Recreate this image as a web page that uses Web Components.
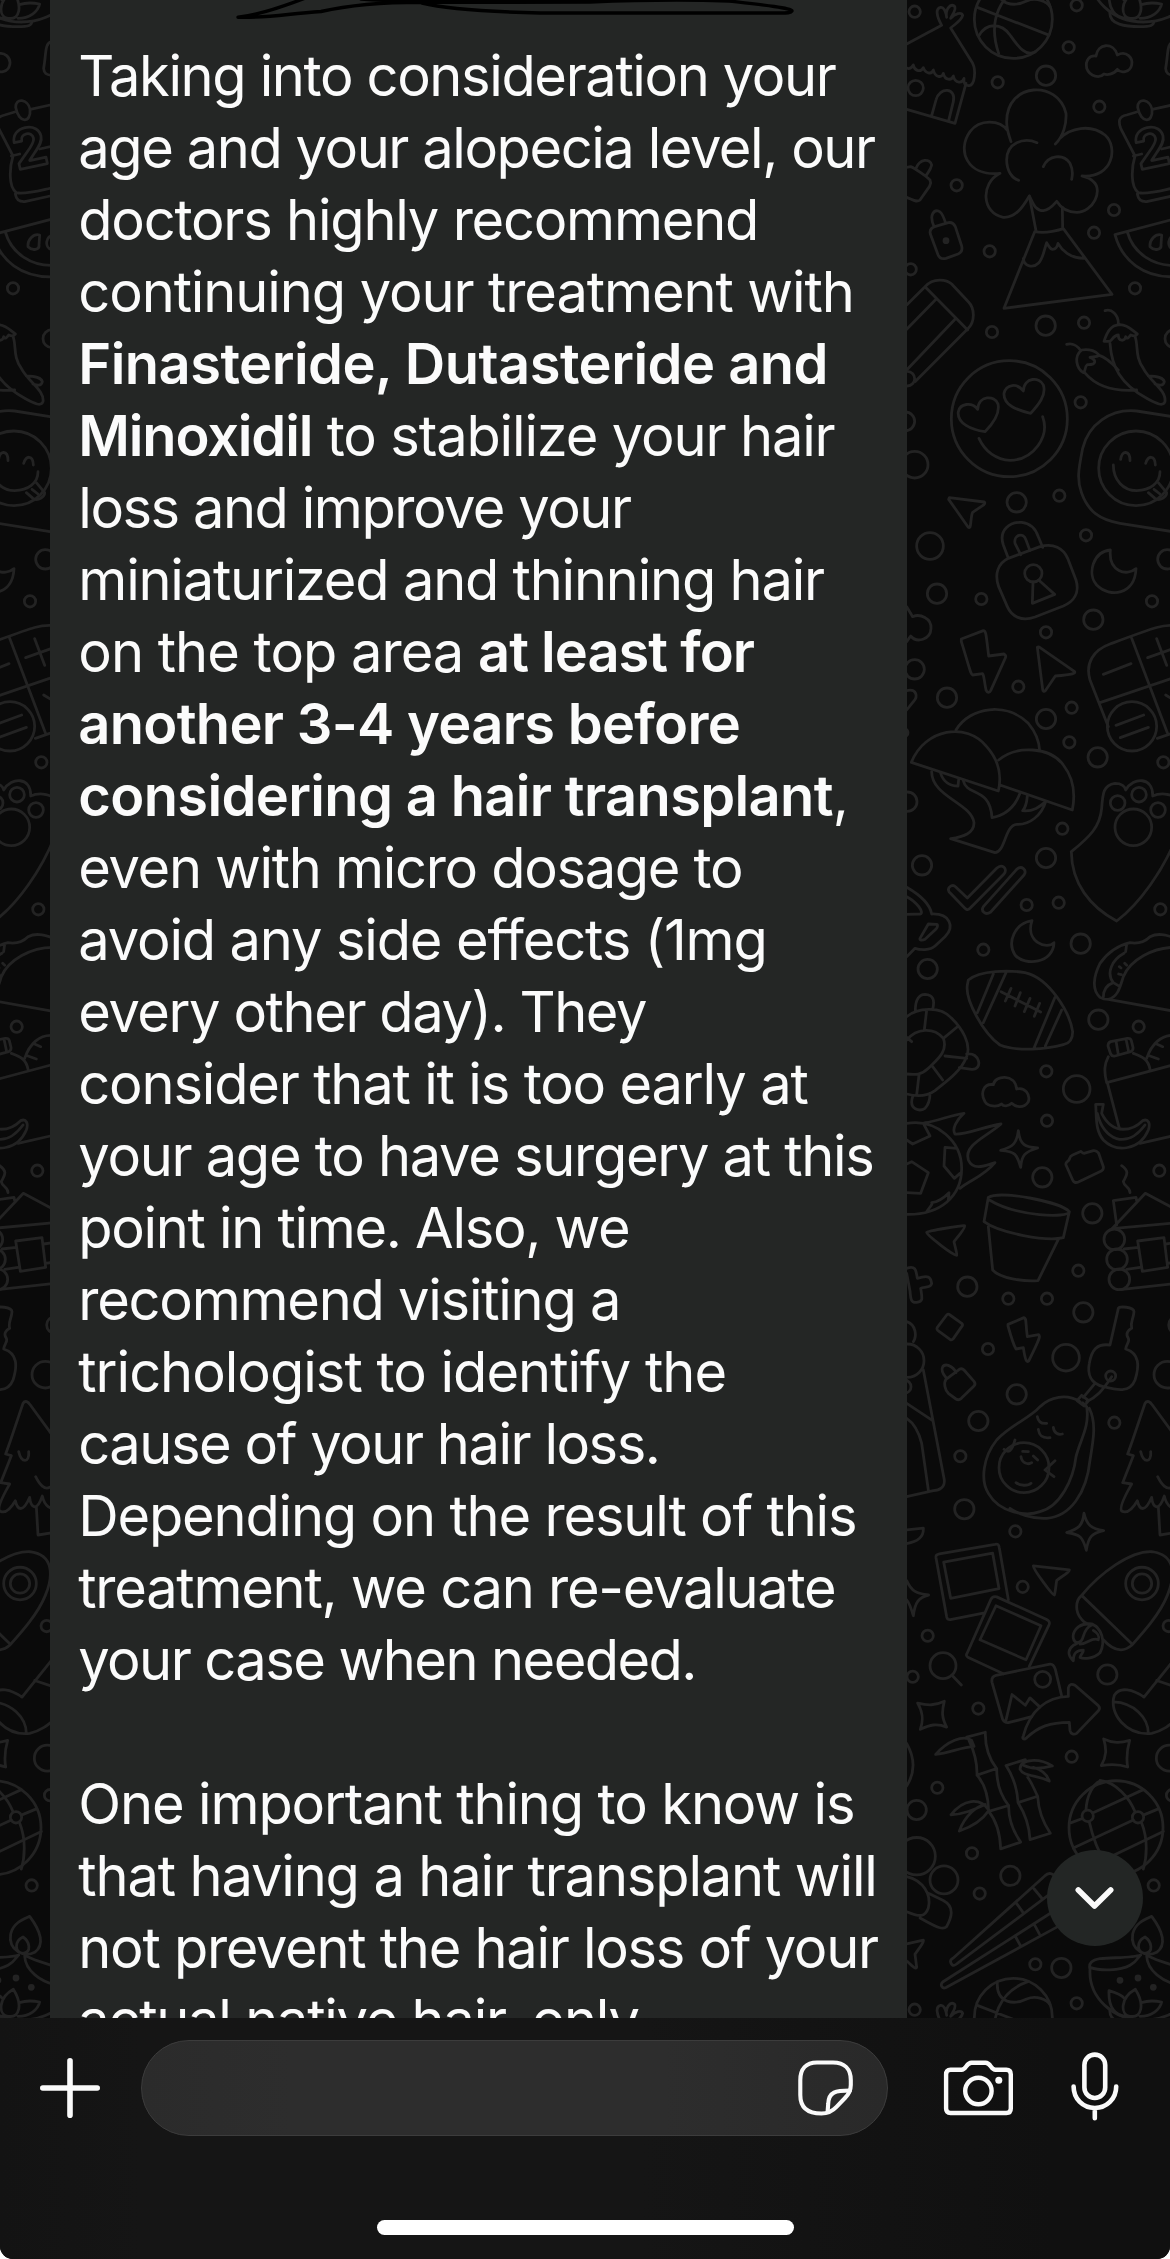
<!DOCTYPE html>
<html lang="en">
<head>
<meta charset="utf-8">
<title>Chat</title>
<style>
  html, body {
    margin: 0;
    background: #fff;
  }

  body {
    font-family: Inter, "Liberation Sans", sans-serif;
    --color-page: #0a0a0a;
    --color-doodle: #232323;
    --color-bubble: #242625;
    --color-text: #fbfbfb;
  }
</style>
</head>
<body>
<chat-screen>
  <chat-wallpaper slot="wallpaper"></chat-wallpaper>
  <chat-bubble>
    <message-line right="835.8">Taking into consideration your</message-line>
    <message-line right="875">age and your alopecia level, our</message-line>
    <message-line right="755">doctors highly recommend</message-line>
    <message-line right="850.7">continuing your treatment with</message-line>
    <message-line right="825.5"><b>Finasteride, Dutasteride and</b></message-line>
    <message-line right="834.6"><b>Minoxidil</b> to stabilize your hair</message-line>
    <message-line right="631">loss and improve your</message-line>
    <message-line right="824">miniaturized and thinning hair</message-line>
    <message-line right="754.8">on the top area <b>at least for</b></message-line>
    <message-line right="738.7"><b>another 3-4 years before</b></message-line>
    <message-line right="844.8"><b>considering a hair transplant</b>,</message-line>
    <message-line right="741">even with micro dosage to</message-line>
    <message-line right="764.5">avoid any side effects (1mg</message-line>
    <message-line right="646">every other day). They</message-line>
    <message-line right="808.4">consider that it is too early at</message-line>
    <message-line right="872.3">your age to have surgery at this</message-line>
    <message-line right="628">point in time. Also, we</message-line>
    <message-line right="618">recommend visiting a</message-line>
    <message-line right="724.4">trichologist to identify the</message-line>
    <message-line right="656.8">cause of your hair loss.</message-line>
    <message-line right="855">Depending on the result of this</message-line>
    <message-line right="834">treatment, we can re-evaluate</message-line>
    <message-line right="693.3">your case when needed.</message-line>
    <message-line></message-line>
    <message-line right="853">One important thing to know is</message-line>
    <message-line right="874.3">that having a hair transplant will</message-line>
    <message-line right="878">not prevent the hair loss of your</message-line>
    <message-line right="638.4">actual native hair, only</message-line>
  </chat-bubble>
  <scroll-button slot="overlay"></scroll-button>
  <message-bar slot="bar"></message-bar>
</chat-screen>

<script>
// Doodle sheets of the wallpaper tile. Each one is drawn at 3x and placed
// at its own y; rings are [x, y, r].
const SHEETS = [
  {
    y: 0,
    sy: 3,
    rings: [
      [44, 35, 17], [506, 142, 17], [293, 247, 17], [598, 320, 17], [170, 556, 17],
      [642, 630, 17], [582, 698, 17], [269, 754, 17], [32, 808, 17], [705, 865, 17],
      [276, 996, 17], [552, 968, 17], [542, 1207, 17], [530, 16, 17], [22, 1136, 22],
      [438, 227, 29], [437, 977, 29], [47, 264, 23], [16, 1264, 28], [44, 1394, 40],
      [822, 1016, 27], [340, 58, 117], [328, 1256, 174], [708, 1405, 112],
    ],
    dots: [[138, 722], [660, -53], [714, -60], [760, -32]],
    paths: [
      // basketball
      'M232 22L443 104M292 -48C288 20 345 20 380 3C410 -9 440 5 450 20M385 -50C300 -20 262 60 296 160M236 108C260 65 305 70 330 105C355 140 375 170 405 156',
      // hut
      'M20 132L125 76C110 50 105 25 122 22C135 20 138 40 140 52C135 30 150 10 163 18C172 28 155 45 152 55C165 40 185 35 188 46C185 62 165 72 152 84L218 190C228 210 225 255 208 257C195 258 190 250 192 235C188 250 165 252 160 228C155 242 135 242 130 220C125 235 105 232 100 210C95 225 75 220 70 203C60 220 42 210 40 195C35 205 28 208 20 204',
      'M198 250L165 370L20 328M95 347L108 300C118 260 170 262 160 305L146 362',
      // cloud
      'M588 168C592 130 640 125 652 165C680 150 700 175 695 195C690 218 662 220 652 208C640 225 620 225 612 222C600 235 570 232 560 205C555 180 570 165 588 168Z',
      // oil lamp
      'M755 -245C790 -198 800 -159 770 -137C740 -120 690 -142 698 -192C705 -225 735 -236 755 -245ZM735 -183C755 -170 762 -137 735 -134C710 -137 708 -170 735 -183Z',
      'M722 -129C700 -120 640 -122 600 -118C575 -114 565 -103 570 -87C565 0 640 66 730 66C790 66 830 40 840 30M570 -92C600 -81 660 -81 690 -98C710 -109 718 -126 722 -129M745 -126C770 -112 800 -105 830 -95M740 -126C742 -80 790 -50 830 -40',
      'M706 -26C660 0 660 50 690 55C725 60 735 20 706 -26ZM690 55C640 60 625 20 627 -22C650 -15 665 -10 672 0M724 14C750 5 775 10 785 12C780 35 755 55 720 55M630 35C625 75 680 80 720 80C755 80 760 75 762 66',
      // volcano
      'M333 425C325 400 320 390 320 365C320 245 475 240 498 340C500 370 490 410 466 432M323 392C300 360 240 355 210 395C170 450 200 530 300 520C240 550 245 640 310 652C350 655 375 610 388 588C400 610 405 632 430 632C450 630 460 615 470 604C480 620 500 637 530 637C580 637 610 570 580 545C570 533 555 530 546 528C640 535 655 440 615 405C570 370 510 385 480 415',
      'M411 428C370 410 320 430 320 480C320 510 335 535 356 541M430 500C445 465 490 460 510 490C520 510 518 525 515 538M388 588L408 692M487 622L488 686',
      'M404 695Q440 702 490 686L636 883L312 925ZM370 775C372 800 400 805 415 790C430 775 432 750 440 728C448 740 450 748 458 748C468 748 472 740 474 730C485 750 510 775 552 775',
      // birthday calendar
      'M830 312L757 328M710 336L680 345C655 350 655 365 662 385L705 468C695 500 690 560 715 578C740 585 790 570 830 562M712 582C715 600 725 606 740 605L830 585M700 468L725 462M785 447L830 437',
      'M713 322C712 292 750 296 756 328C760 370 722 372 713 322Z',
      // watermelon
      'M645 704L830 655M645 704C665 780 730 835 830 830M682 696C700 760 760 800 830 796M785 705C765 700 748 720 750 740C765 755 785 748 783 735ZM830 705C800 705 800 745 820 748M820 125C800 130 805 160 797 205C798 220 805 224 820 226',
      // chillies
      'M615 932C635 925 655 945 655 970M612 1024C620 1000 630 975 660 974C685 975 695 990 712 1002C705 1010 700 1008 692 1005C685 1015 680 1018 677 1010C675 1025 655 1025 655 1005C640 1005 635 1024 628 1024Z',
      'M630 1030C635 1100 660 1150 740 1195C770 1212 790 1220 795 1205C800 1170 750 1145 730 1105C705 1070 715 1040 706 1012M745 1128C775 1128 790 1135 793 1145C790 1160 775 1155 765 1152',
      'M500 1033C520 1028 535 1040 542 1052M550 1118C530 1105 520 1070 545 1050C570 1045 590 1055 598 1066C590 1072 578 1070 570 1072C590 1080 590 1095 562 1094C552 1100 560 1110 550 1118ZM556 1120C590 1160 640 1175 710 1170M598 1066C625 1075 645 1100 655 1110',
      // padlocks
      'M20 502L32 500C45 505 80 530 90 540C95 550 90 555 88 560L60 600C50 608 40 600 20 592M48 505C60 475 90 475 95 495C92 510 82 520 78 527',
      'M104 680L145 668C155 666 162 672 166 680L185 738C188 750 183 758 174 762L138 775C126 778 118 774 114 764L91 702C88 690 94 684 104 680ZM102 680C85 640 105 630 115 633C130 638 132 660 137 668',
      // pencil
      'M20 915L75 860C100 832 140 838 155 852L205 905C225 925 225 965 205 985L45 1145M20 1110L165 958M20 988L108 898M75 860L203 990',
      // heart eyes
      'M233 1228C215 1205 180 1210 175 1235C170 1270 215 1290 255 1295C280 1270 300 1240 294 1212C285 1185 235 1185 233 1228ZM370 1173C352 1148 318 1152 312 1180C310 1215 350 1230 392 1240C415 1215 440 1185 430 1155C420 1130 372 1130 370 1173ZM237 1315C255 1355 290 1380 330 1381C400 1380 450 1310 428 1250',
      // tongue face
      'M830 1252L710 1233C630 1225 565 1275 548 1345C535 1410 530 1440 545 1480C565 1535 600 1560 660 1570L830 1597M662 1378C665 1350 690 1350 690 1382M737 1390C745 1365 765 1365 766 1395M640 1395C640 1440 670 1472 710 1472C750 1470 780 1450 780 1415',
      'M745 1478L765 1495C780 1505 800 1490 800 1478L775 1448M762 1468L780 1482',
    ],
  },
  {
    y: 480,
    sy: 3,
    rings: [
      [478, 47, 17], [558, 166, 17], [244, 357, 17], [756, 364, 17], [438, 457, 17],
      [355, 620, 17], [515, 683, 17], [508, 787, 17], [487, 1046, 17], [790, 847, 17],
      [380, 1275, 17], [476, 1268, 17], [781, 1288, 17], [250, 1409, 17],
      [350, 67, 29], [111, 341, 29], [580, 419, 29], [44, 568, 29], [141, 653, 29],
      [438, 717, 29], [593, 832, 29], [438, 1134, 29], [66, 1156, 29], [542, 1391, 29],
      [802, 238, 29], [90, 198, 40], [22, 965, 29], [12, 758, 12],
      [400, 280, 26], [696, 739, 74], [653, 969, 22], [717, 944, 22], [774, 990, 22], [700, 1042, 55],
    ],
    dots: [],
    paths: [
      'M20 380L38 410C60 400 95 415 93 445C92 480 50 490 32 468L20 485M20 632C50 625 55 650 40 665L20 690',
      // cursors
      'M148 53L253 66C258 72 250 75 218 97C213 105 213 135 210 141C206 145 203 140 200 135L146 58ZM412 502C414 500 418 500 420 503L524 575C526 580 522 583 466 588L436 632C432 636 428 634 428 628Z',
      // padlock
      'M325 235L420 200C460 188 490 205 503 235L528 300C540 340 520 365 490 378L405 411C365 425 335 410 322 380L296 320C282 280 295 250 325 235ZM325 235L310 195C295 150 330 125 365 127C395 130 408 150 415 170L428 202M362 224L345 190C340 165 370 155 378 180L390 212M399 306L397 370L464 343L416 300',
      // moons
      'M631 210C580 215 560 280 590 315C630 355 705 345 708 266C680 290 625 275 631 210ZM396 1322C345 1330 320 1385 345 1425C375 1460 460 1450 462 1388C440 1410 375 1385 396 1322Z',
      // bolt
      'M184 477L250 452C258 452 258 460 266 528L312 522C318 525 318 530 316 534L272 632C268 640 262 638 258 630C252 600 252 585 248 581L218 585C212 583 212 575 184 485Z',
      // calculator
      'M830 437C790 432 770 440 630 492C580 510 555 550 570 600L625 740M695 475L802 758M600 668L830 590M772 775L830 755M610 583L693 551M743 533L830 502M770 476L800 556M648 736L731 705M661 773L745 742M797 645L830 665',
      // mushrooms
      'M34 847C75 745 200 725 260 800C300 845 305 890 295 933ZM168 750C210 680 320 665 385 730C410 760 418 790 419 812M296 840C350 795 450 800 490 855C525 900 525 950 517 990L300 915',
      'M95 875C95 950 215 970 222 1028C222 1060 190 1070 152 1076L285 1118C315 1118 315 1035 350 1033C390 1035 425 1005 437 965M190 902C200 950 270 920 276 1013C320 1005 345 980 360 940M122 880C130 905 150 918 174 918L176 898M382 948C380 970 375 985 368 992C400 995 420 980 437 965',
      // check marks
      'M147 1235C140 1220 160 1210 168 1222L202 1254L290 1165C305 1150 325 1165 312 1182L210 1285C203 1292 198 1288 194 1284ZM250 1280L350 1168C365 1155 382 1170 372 1185L272 1296C255 1308 242 1292 250 1280Z',
      // paw
      'M514 1115C570 1070 600 1040 605 985C608 940 610 915 645 910C665 910 675 920 677 930C700 890 760 890 758 948C780 938 810 940 830 955M514 1115C515 1210 570 1280 650 1323C720 1270 790 1170 830 1070',
      // tea cup
      'M20 1222C60 1245 90 1275 95 1302C150 1300 165 1340 135 1370L105 1398C90 1412 60 1410 45 1405L20 1430M20 1250C50 1265 75 1300 60 1302L20 1303M85 1332L110 1333C115 1335 112 1345 105 1350L75 1378C65 1383 58 1380 60 1375Z',
    ],
  },
  {
    y: 960,
    sy: 3,
    rings: [
      [716, 200, 17], [439, 334, 17], [441, 482, 17], [778, 632, 17], [535, 932, 17],
      [325, 1016, 17], [441, 1016, 17], [264, 1167, 17], [643, 1388, 17],
      [83, 27, 29], [595, 179, 29], [427, 652, 29], [577, 760, 29], [202, 980, 29],
      [550, 1057, 29], [350, 1303, 29], [235, 1383, 29],
      [530, 387, 40], [498, 1193, 40], [802, 1244, 40], [832, 1095, 26],
      [643, 838, 31], [651, 898, 31], [658, 958, 31], [632, 1248, 15],
      [372, 1523, 75], [22, 1202, 50], [13, 1280, 20],
    ],
    dots: [],
    paths: [
      // taco
      'M600 10C625 -25 660 -45 690 -52C715 -48 735 -55 750 -70C780 -85 810 -70 830 -65M600 10C580 50 575 90 600 112C610 118 620 118 625 118L830 155M830 -38C760 -40 690 0 670 50C660 80 655 110 625 118M610 112C610 90 620 75 640 68L660 80M672 -20C635 0 618 40 640 68M680 -48L677 -25M658 20L663 24M656 42L664 44M674 10L680 16',
      // football
      'M205 60C240 30 330 30 375 38C450 55 510 160 518 215C518 235 510 250 490 254C440 268 350 275 300 255C250 220 195 120 202 75ZM280 42L232 158M318 38L250 188M465 112L403 262M485 150L436 258M303 95L422 156M333 85L316 123M361 98L345 138M390 115L373 155M419 130L403 169',
      // turtle
      'M20 170C50 145 120 135 155 175C185 205 215 250 200 290C180 340 130 370 105 392C80 410 50 410 20 402M20 240C50 205 100 200 130 235C145 275 110 300 85 325C65 345 45 345 20 342M80 150L73 210M175 198L130 235M200 295L135 288M98 320L128 360M57 345L50 405M20 232L35 245M46 155C45 115 60 103 75 103C100 105 105 120 98 148M200 282C240 275 250 330 215 328L178 323M38 410C25 450 60 455 75 445C90 430 90 410 90 400',
      // cloud
      'M280 374C285 345 345 340 350 387C375 380 392 405 385 425C370 448 345 440 335 430C325 440 310 440 305 432C290 442 265 440 255 425C240 400 250 370 280 374Z',
      // soccer ball on fire
      'M20 490C110 475 185 545 185 625C185 710 120 765 20 763M75 488C110 485 150 465 192 460C170 480 155 505 165 522C200 525 250 500 303 492C260 530 190 555 205 600C220 635 260 615 285 608C250 650 210 660 180 685M20 612L35 605L85 638L62 700L20 698M20 540L38 552L90 528L70 490M170 565L135 562L132 618L163 655L180 640M80 755C90 740 100 730 95 728C120 725 140 705 147 698L145 720',
      // sparkle
      'M355 512C360 555 375 562 413 564C375 575 365 585 362 622C350 580 345 575 302 571C340 560 350 550 355 512Z',
      // camera
      'M498 615C495 605 505 605 508 598C510 590 510 588 518 585L540 575C545 572 545 580 552 580L580 572C590 570 592 575 596 580L610 620C612 628 608 630 604 633L535 666C525 670 520 665 518 660Z',
      // flower pot
      'M265 712C300 690 480 725 508 755C505 775 350 770 268 720M265 712L252 785C300 820 440 845 490 833L508 755M265 800L278 930C300 955 370 965 414 962L475 838',
      'M80 817C82 813 190 795 194 797C198 803 165 840 162 845C165 860 172 882 170 886C164 890 80 825 80 817Z',
      // plus and diamond
      'M20 925C50 915 48 935 52 955C85 945 92 950 95 970C95 985 70 980 62 985C68 1020 68 1025 50 1027C30 1030 32 1010 30 993L20 940M112 1102L140 1065Q145 1060 150 1065L185 1090Q190 1095 185 1100L160 1136Q155 1142 150 1138L114 1112Q109 1108 112 1102Z',
      // bolt
      'M324 1093L372 1073C380 1075 376 1085 382 1130L416 1124C422 1128 420 1135 386 1203C380 1208 376 1203 370 1163L348 1167C345 1162 340 1155 324 1098Z',
      // small lock
      'M138 1258L178 1228Q186 1224 192 1230L222 1264Q228 1272 222 1278L184 1315Q176 1322 168 1317L145 1300C135 1290 130 1270 138 1258ZM138 1253C115 1225 130 1212 145 1216C155 1220 165 1230 168 1238',
      // grocery bag
      'M632 245L682 235Q692 234 694 242L699 262Q700 272 692 275L645 288Q636 290 632 282L624 258Q624 248 632 245ZM648 242L655 284M678 237L686 275M625 290C615 310 610 330 620 368L830 312M622 368L658 505M700 280C730 290 745 300 750 328M740 295C755 250 785 225 820 226M765 250L788 260M750 288L775 297M720 550L830 525M830 330L822 316',
      // banana
      'M587 433L610 433L605 460C640 530 700 510 728 482C745 475 752 490 745 510C720 570 650 580 610 540C585 510 590 470 587 433ZM592 460C610 540 680 570 735 495',
      // log cabin
      'M665 617C690 635 680 645 670 665C672 680 690 680 690 698M710 722L708 712L640 722L650 795M636 806L736 700L830 750M636 806L830 788M672 867L715 862M680 928L720 922M660 989L830 970M713 843L792 833L803 922L727 934ZM797 852L830 847M803 910L830 906',
      // key
      'M655 1045C658 1038 700 1040 702 1055C700 1080 690 1085 695 1105C685 1110 675 1120 685 1135C690 1145 680 1150 677 1167C720 1180 718 1220 705 1260C690 1300 650 1290 610 1280C570 1270 562 1240 568 1210C575 1170 590 1150 630 1155ZM635 1250C605 1295 590 1310 560 1325M585 1270L550 1312M545 1306L566 1322L552 1338L531 1322Z',
      // avocado
      'M540 1325C500 1300 450 1310 420 1340C390 1375 330 1395 290 1440C250 1490 240 1560 265 1600C300 1660 380 1670 420 1655C480 1640 520 1560 528 1490C540 1440 570 1400 560 1340L548 1328M568 1345C590 1390 580 1440 570 1500C560 1600 510 1670 440 1675C400 1678 350 1660 330 1645',
      'M412 1370C415 1385 425 1392 440 1390M415 1408C418 1430 430 1435 450 1433M460 1402C462 1420 475 1425 487 1422M363 1490C365 1510 385 1515 395 1508M400 1488L413 1500M368 1474L385 1475M348 1568C360 1578 385 1578 393 1570M465 1502L435 1530L462 1550M312 1468C325 1480 335 1475 345 1440',
      // pine tree
      'M698 1440L735 1330C742 1320 750 1325 757 1335L830 1435M698 1440L683 1482L700 1487L668 1568L695 1572C685 1590 655 1640 665 1653C685 1665 705 1635 712 1622C718 1650 735 1660 755 1612C758 1640 775 1660 793 1608C800 1640 820 1650 830 1640M775 1640L780 1725L830 1717M722 1475C730 1510 755 1510 752 1475M773 1550C785 1575 800 1590 815 1582',
      // suitcase
      'M20 1085C50 1095 50 1130 40 1145M70 1230L133 1560C135 1580 120 1592 100 1592L20 1610M20 1330L98 1382M20 1375C50 1395 60 1430 65 1450L85 1590',
    ],
  },
  {
    y: 1440,
    sy: 2.703,
    rings: [
      [181, 44, 17], [346, 247, 17], [368, 397, 17], [83, 529, 17], [38, 640, 17],
      [235, 726, 17], [515, 856, 17], [112, 940, 17], [216, 1117, 17], [239, 1226, 17],
      [761, 1204, 17], [406, 1417, 17], [806, 503, 17], [816, 960, 17],
      [193, 187, 29], [622, 634, 29], [50, 1000, 29], [331, 1178, 29], [484, 1427, 29],
      [129, 610, 39], [50, 1125, 56], [132, 1189, 42], [808, 860, 39],
      [428, 647, 24], [726, 388, 49], [726, 388, 29], [648, 1048, 141], [563, 1016, 17], [714, 1020, 17],
    ],
    dots: [],
    paths: [
      'M20 820C45 860 45 900 20 935M20 243L70 238C72 265 50 275 20 280M158 638L184 662',
      // sparkles
      'M20 380C35 410 50 415 86 419C55 425 45 440 40 475C32 450 28 440 20 432M552 198C560 230 575 240 611 245C575 252 565 262 559 298C548 262 540 255 500 250C535 240 548 232 552 198Z',
      'M53 711C85 718 105 718 133 706C125 735 125 750 140 776C110 765 90 770 61 782C72 755 68 735 53 711ZM611 808C640 820 660 820 689 812C680 840 678 858 683 884C655 875 635 875 604 880C620 855 620 835 611 808Z',
      // photos
      'M325 432L298 292C297 285 295 280 285 282L118 308C108 310 107 312 108 318L140 478C142 485 145 487 155 485L250 468M131 330L278 306L297 402L152 428ZM388 612L446 502C450 495 450 490 440 485L290 424C282 422 276 424 272 432L202 575C198 580 198 585 205 588L310 632M288 448L423 502L378 594L240 540Z',
      'M485 692L466 620C463 612 460 605 450 606L288 636C276 639 274 645 276 655L308 755C312 762 315 765 325 764L395 748M318 757L336 688L376 717L390 697L420 722',
      // forward arrow
      'M370 800C390 730 440 695 505 693L505 670C508 660 515 658 525 663L595 718C600 723 600 727 595 732L530 793C522 797 512 795 510 785L508 763C450 763 415 775 380 805C370 812 366 806 370 800Z',
      'M400 340L508 351C512 356 472 376 470 380C468 390 466 412 463 419C458 420 398 348 400 340ZM20 1362L70 1352C75 1355 48 1385 45 1390L50 1425C48 1432 40 1425 20 1408',
      // rocket
      'M545 420C600 360 690 300 755 302C830 310 825 370 802 420C780 470 730 520 695 555C670 575 640 570 610 540M545 420C525 435 525 465 545 485C550 492 558 495 565 498M545 420L697 552',
      'M520 597C500 580 505 565 520 555C530 550 535 550 530 548C515 540 515 520 535 505C550 496 562 496 575 497C605 508 618 545 600 575C580 592 550 592 540 588C540 580 552 575 550 568C530 568 520 575 520 597ZM530 548C560 545 540 515 575 500M540 552C565 550 575 532 595 540C600 530 590 520 580 515',
      // sock
      'M830 585L732 695C700 675 660 665 643 690C625 740 680 800 755 793C790 785 810 770 830 755M641 708C700 710 745 750 745 793M770 650L830 668',
      // bamboo
      'M200 803L256 790C255 830 270 865 290 888C290 930 305 965 326 988C325 1030 345 1065 362 1087L302 1105C300 1060 290 1030 266 1004C265 960 255 930 231 906C232 870 222 840 207 812M231 906L290 888M266 1004L326 988M107 850C140 815 190 795 215 812L222 828C185 830 150 845 107 850ZM153 1013C190 970 240 965 266 1000M153 1013C190 1012 220 1000 255 985M178 1057C195 1015 230 990 255 985M178 1057C215 1045 245 1030 264 1004',
      'M376 864L318 880C340 910 352 945 354 980C375 1010 388 1045 390 1080L451 1063C430 1035 415 1000 413 963C400 940 395 925 383 912M354 980L413 963M360 890C360 860 420 860 457 881C420 890 390 888 372 880M360 890C370 910 410 905 448 922C440 900 420 890 400 885',
      // globe
      'M558 1000C560 960 580 930 600 922M568 1033C580 1080 600 1120 615 1140M512 1035L547 1023M578 1008L730 945M600 920C650 925 690 970 705 1005M725 1035C745 1080 740 1130 730 1160M520 1103L700 1027M730 1014L775 997M600 1140L790 1058',
      // chopsticks
      'M460 1220L172 1415C165 1420 158 1425 152 1412C150 1405 155 1402 160 1400L435 1178C445 1168 460 1170 470 1185M350 1253L370 1278M402 1213L425 1238M450 1280L128 1465C120 1472 125 1485 138 1480L480 1312M345 1340L362 1368M402 1308L418 1335',
      // fingers
      'M20 1180C70 1190 95 1230 85 1265C75 1290 60 1290 20 1275M85 1225L130 1245C165 1262 155 1290 140 1315C130 1325 115 1320 60 1292',
    ],
  },
];

const TILE_WIDTH = 1122;
const TILE_HEIGHT = 1998;

class ChatScreen extends HTMLElement {
  constructor() {
    super();
    this.attachShadow({mode: 'open'});
    this.shadowRoot.innerHTML = `
<style>
  :host {
    display: grid;
    grid-template-rows: 2018px 241px;
    width: 1170px;
    height: 2259px;
    border-radius: 0 0 13px 13px;
    overflow: hidden;
    background: var(--color-page);
  }

  main {
    position: relative;
    overflow: hidden;
  }
</style>
<main>
  <slot name="wallpaper"></slot>
  <slot></slot>
  <slot name="overlay"></slot>
</main>
<slot name="bar"></slot>`;
  }
}

class ChatWallpaper extends HTMLElement {
  constructor() {
    super();
    this.attachShadow({mode: 'open'});
  }

  connectedCallback() {
    this.render();
  }

  renderSheet({y, sy, rings, dots, paths}) {
    const ry = (r) => (r * sy / 3).toFixed(1);
    return `
      <g transform="translate(900 ${y}) scale(${1 / 3} ${1 / sy})">
        ${rings.map(([cx, cy, r]) => `<ellipse cx="${cx}" cy="${cy}" rx="${r}" ry="${ry(r)}"/>`).join('')}
        ${dots.map(([cx, cy]) => `<circle class="dot" cx="${cx}" cy="${cy}" r="6"/>`).join('')}
        ${paths.map((d) => `<path d="${d}"/>`).join('')}
      </g>`;
  }

  render() {
    const tiles = [[0, 0], [-TILE_WIDTH, 0], [0, TILE_HEIGHT], [-TILE_WIDTH, TILE_HEIGHT]];
    this.shadowRoot.innerHTML = `
<style>
  :host {
    display: block;
    position: absolute;
    inset: 0;
  }

  svg {
    display: block;
    fill: none;
    stroke: var(--color-doodle);
    stroke-width: 2.8;
    stroke-linecap: round;
    stroke-linejoin: round;
  }

  path, ellipse, circle {
    vector-effect: non-scaling-stroke;
  }

  .dot {
    fill: var(--color-doodle);
  }

  text {
    font: 700 54px Inter, sans-serif;
  }
</style>
<svg width="1170" height="2018" viewBox="0 0 1170 2018" aria-hidden="true">
  <defs>
    <g id="tile">
      ${SHEETS.map((sheet) => this.renderSheet(sheet)).join('')}
      <text transform="translate(1139 170) rotate(-12)">2</text>
    </g>
  </defs>
  ${tiles.map(([x, y]) => `<use href="#tile" x="${x}" y="${y}"/>`).join('')}
</svg>`;
  }
}

class ChatBubble extends HTMLElement {
  constructor() {
    super();
    this.attachShadow({mode: 'open'});
    this.shadowRoot.innerHTML = `
<style>
  :host {
    display: block;
    position: relative;
    box-sizing: border-box;
    width: 857px;
    height: 2018px;
    margin-left: 50px;
    padding: 39.5px 27px 0 28.3px;
    overflow: hidden;
    background: var(--color-bubble);
    color: var(--color-text);
  }

  /* marker strokes over the sender's name */
  svg {
    position: absolute;
    left: 0;
    top: 0;
    fill: none;
    stroke: #000;
    stroke-width: 3.4;
    stroke-linecap: round;
    stroke-linejoin: round;
  }
</style>
<svg width="857" height="30" viewBox="50 0 857 30" aria-hidden="true">
  <path d="M308 -3C290 4 260 15 238 17.3C270 18 285 14 321 11.5C345 6 380 2 425 2.2C460 2.5 560 2.5 590 2C640 0 700 0 729 1C755 4 793 8 792 11C791 13 787 13 780 13H540C500 12 450 10 422 3"/>
  <path d="M361 -1C400 2 430 1 600 1"/>
</svg>
<slot></slot>`;
  }
}

class MessageLine extends HTMLElement {
  constructor() {
    super();
    this.attachShadow({mode: 'open'});
    this.shadowRoot.innerHTML = `
<style>
  :host {
    display: block;
    height: 72px;
    font-size: 56px;
    line-height: 72px;
    white-space: nowrap;
    font-variant-ligatures: none;
  }

  ::slotted(b) {
    font-weight: 600;
  }
</style>
<span><slot></slot></span>`;
    this.span = this.shadowRoot.querySelector('span');
  }

  connectedCallback() {
    this.fit();
  }

  // tracks the line so that its last glyph ends on the right attribute
  fit() {
    const text = this.textContent;
    if (!text || !this.hasAttribute('right')) {
      return;
    }
    const ctx = document.createElement('canvas').getContext('2d');
    const bold = this.lastChild.nodeName === 'B';
    ctx.font = `${bold ? 600 : 400} 56px Inter`;
    const last = ctx.measureText(text.slice(-1));
    const bearing = last.width - last.actualBoundingBoxRight;
    const box = this.span.getBoundingClientRect();
    const gap = Number(this.getAttribute('right')) - (box.right - bearing);
    this.style.letterSpacing = `${gap / (text.length - 1)}px`;
  }
}

class ScrollButton extends HTMLElement {
  constructor() {
    super();
    this.attachShadow({mode: 'open'});
    this.shadowRoot.innerHTML = `
<style>
  :host {
    display: block;
    position: absolute;
    right: 27px;
    bottom: 72px;
    width: 96px;
    height: 96px;
    border-radius: 50%;
    background: #232625;
  }

  svg {
    display: block;
    fill: none;
    stroke: #fafafa;
    stroke-width: 5.6;
    stroke-linecap: round;
    stroke-linejoin: round;
  }
</style>
<svg width="96" height="96" viewBox="0 0 96 96"><path d="M31.3 40L47.5 56L63.7 40"/></svg>`;
  }
}

class MessageBar extends HTMLElement {
  constructor() {
    super();
    this.attachShadow({mode: 'open'});
    this.shadowRoot.innerHTML = `
<style>
  :host {
    display: flex;
    flex-direction: column;
    align-items: center;
    justify-content: space-between;
    box-sizing: border-box;
    padding: 22px 0 24px;
    background: linear-gradient(90deg, #131313, #151515 12%, #151515 55%, #101010 90%);
  }

  .row {
    display: flex;
    align-items: center;
    box-sizing: border-box;
    width: 100%;
    padding: 0 51px 0 40px;
  }

  .field {
    display: flex;
    align-items: center;
    justify-content: flex-end;
    box-sizing: border-box;
    width: 747px;
    height: 96px;
    margin: 0 55px 0 41px;
    padding-right: 33px;
    border: 1px solid #3c3c3c;
    border-radius: 48px;
    background: linear-gradient(90deg, #2b2b2b, #2d2d2d 20%, #2d2d2d 70%, #292929);
  }

  .home {
    width: 417px;
    height: 15px;
    border-radius: 8px;
    background: #fff;
  }

  svg {
    display: block;
    flex: none;
    fill: none;
    stroke: #fafafa;
    stroke-width: 4.4;
    stroke-linecap: round;
    stroke-linejoin: round;
  }

  .camera {
    margin-right: 57px;
  }

  .mic {
    margin-bottom: 4px;
  }
</style>
<div class="row">
  <svg width="60" height="60" viewBox="0 0 60 60" style="stroke-width: 5.6">
    <path d="M30 2.8V57.2M2.8 30H57.2"/>
  </svg>
  <div class="field">
    <svg width="56" height="56" viewBox="0 0 56 56" style="stroke-width: 4.1">
      <path d="M19 2.5H35C46.5 2.5 52.8 9 52.8 20V25C52.8 31 50.5 34.5 47 38L38.5 46.8C34.5 51 30 53.5 23.5 53.5C9 53.5 2.3 47 2.3 35V20C2.3 9 8 2.5 19 2.5Z"/>
      <path d="M52 30.5C38 30.5 30.5 31.5 30.2 44L29.6 52"/>
    </svg>
  </div>
  <svg class="camera" width="71" height="56" viewBox="0 0 71 56">
    <path d="M7.5 9.8H18.5C23.5 9.8 23 2.7 28.5 2.7H42.5C48 2.7 47.5 9.8 52.5 9.8H63.3C66.5 9.8 67.8 11.4 67.8 14.3V48.5C67.8 51.4 66.5 53 63.3 53H7.5C4.3 53 3.1 51.4 3.1 48.5V14.3C3.1 11.4 4.3 9.8 7.5 9.8Z"/>
    <circle cx="35.4" cy="31" r="13.2"/>
    <circle cx="55.8" cy="20.3" r="3.5" style="fill: #fafafa; stroke: none"/>
  </svg>
  <svg class="mic" width="48" height="70" viewBox="0 0 48 70" style="stroke-width: 4.6">
    <rect x="13.4" y="3.6" width="20.8" height="43.4" rx="10.4"/>
    <path d="M2.6 35.5C2.6 48 12 57 23.8 57S45.2 48 45.2 35.5M23.8 57.5V67.3"/>
  </svg>
</div>
<div class="home"></div>`;
  }
}

window.customElements.define('chat-screen', ChatScreen);
window.customElements.define('chat-wallpaper', ChatWallpaper);
window.customElements.define('chat-bubble', ChatBubble);
window.customElements.define('message-line', MessageLine);
window.customElements.define('scroll-button', ScrollButton);
window.customElements.define('message-bar', MessageBar);
</script>
</body>
</html>
